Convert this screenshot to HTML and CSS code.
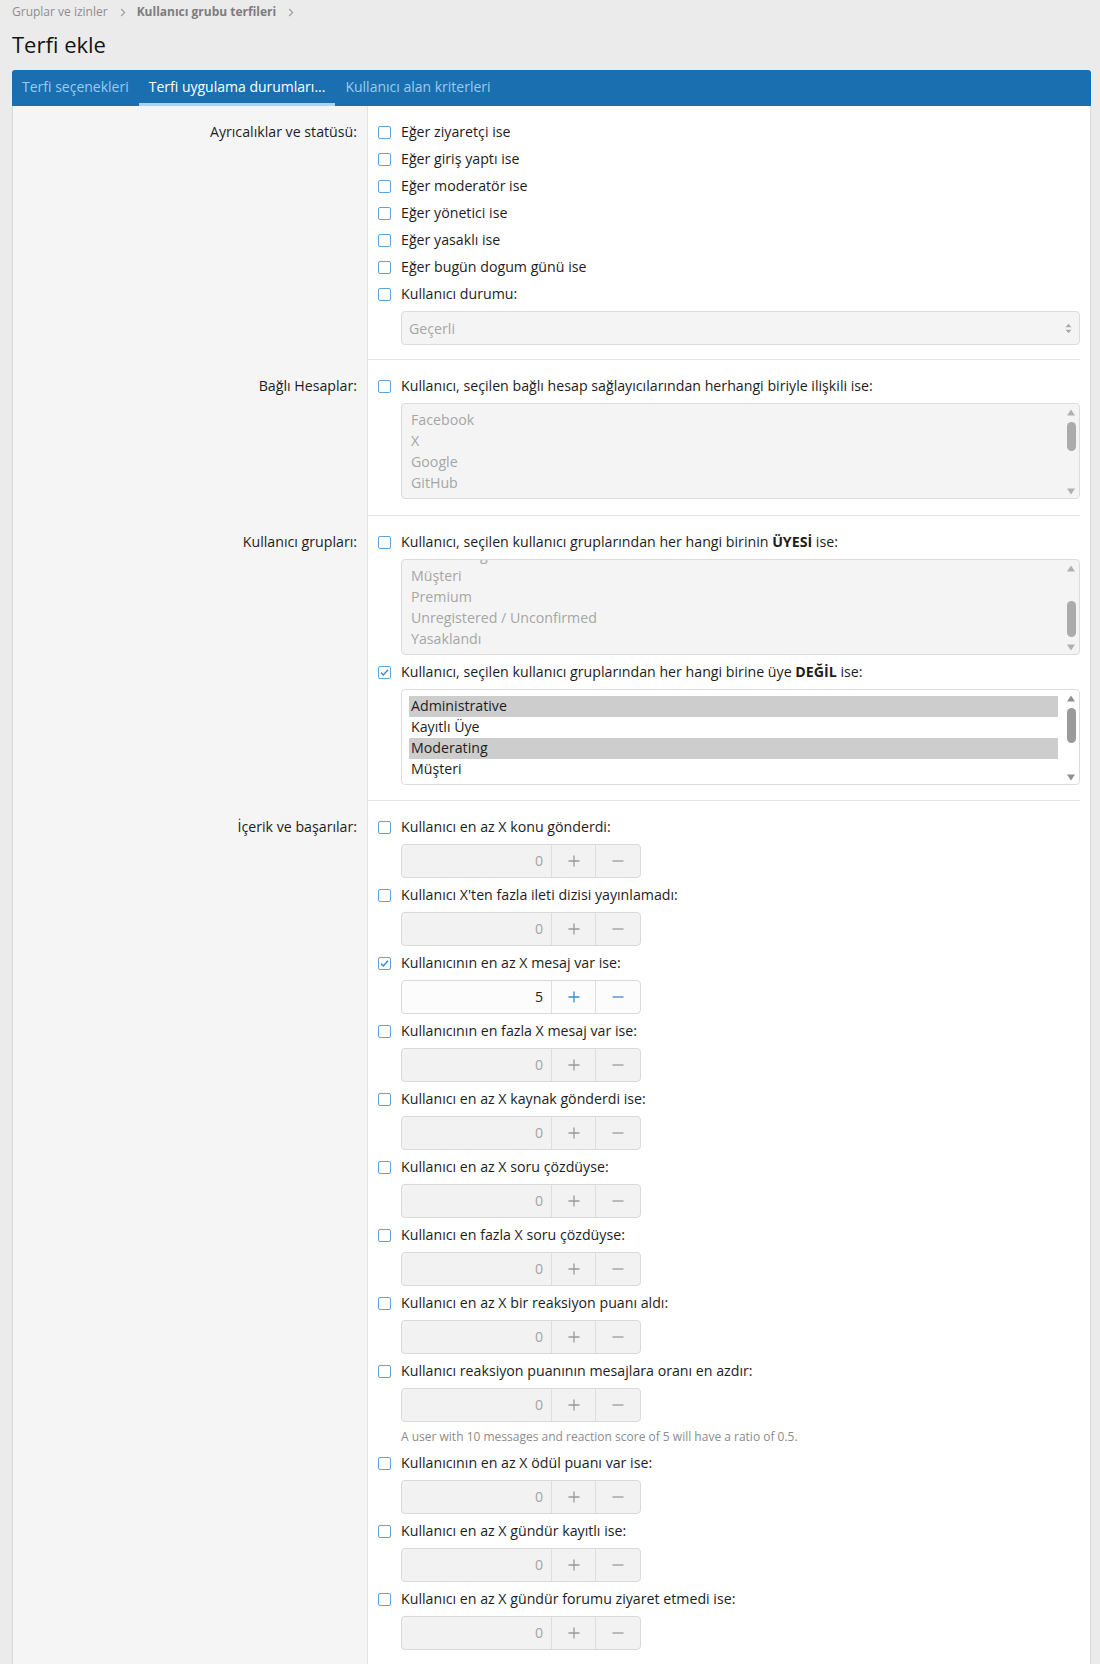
FILE: index.html
```html
<!DOCTYPE html>
<html lang="tr">
<head>
<meta charset="utf-8">
<title>Terfi ekle</title>
<link rel="stylesheet" href="styles.css">
</head>
<body>
<div class="page">
  <nav class="crumbs">
    <span class="crumb">Gruplar ve izinler</span>
    <span class="chev"><svg width="6" height="9" viewBox="0 0 6 9"><path d="M1.2 1 L4.6 4.5 L1.2 8" fill="none" stroke="#a0a0a0" stroke-width="1.2"/></svg></span>
    <span class="crumb crumb-b">Kullanıcı grubu terfileri</span>
    <span class="chev"><svg width="6" height="9" viewBox="0 0 6 9"><path d="M1.2 1 L4.6 4.5 L1.2 8" fill="none" stroke="#a0a0a0" stroke-width="1.2"/></svg></span>
  </nav>
  <h1 class="title">Terfi ekle</h1>

  <div class="block">
    <div class="tabs">
      <span class="tab">Terfi seçenekleri</span>
      <span class="tab active">Terfi uygulama durumları...</span>
      <span class="tab">Kullanıcı alan kriterleri</span>
    </div>

    <div class="form">
      <!-- Row 1 -->
      <div class="row row-1">
        <div class="dt">Ayrıcalıklar ve statüsü:</div>
        <div class="dd"><div class="dd-in">
          <ul class="choices">
            <li class="choice"><label class="cb-line"><span class="cb"></span><span>Eğer ziyaretçi ise</span></label></li>
            <li class="choice"><label class="cb-line"><span class="cb"></span><span>Eğer giriş yaptı ise</span></label></li>
            <li class="choice"><label class="cb-line"><span class="cb"></span><span>Eğer moderatör ise</span></label></li>
            <li class="choice"><label class="cb-line"><span class="cb"></span><span>Eğer yönetici ise</span></label></li>
            <li class="choice"><label class="cb-line"><span class="cb"></span><span>Eğer yasaklı ise</span></label></li>
            <li class="choice"><label class="cb-line"><span class="cb"></span><span>Eğer bugün dogum günü ise</span></label></li>
            <li class="choice dep-choice"><label class="cb-line"><span class="cb"></span><span>Kullanıcı durumu:</span></label>
              <div class="dep">
                <div class="select">
                  <span class="select-val">Geçerli</span>
                  <svg class="select-arrow" width="7" height="11" viewBox="0 0 7 11"><path d="M0.5 4.3 L3.5 0.8 L6.5 4.3 Z M0.5 6.7 L3.5 10.2 L6.5 6.7 Z" fill="#ababab"/></svg>
                </div>
              </div>
            </li>
          </ul>
        </div></div>
      </div>

      <!-- Row 2 -->
      <div class="row row-2">
        <div class="dt">Bağlı Hesaplar:</div>
        <div class="dd"><div class="dd-in">
          <ul class="choices">
            <li class="choice dep-choice"><label class="cb-line"><span class="cb"></span><span>Kullanıcı, seçilen bağlı hesap sağlayıcılarından herhangi biriyle ilişkili ise:</span></label>
              <div class="dep">
                <div class="lb lb-disabled">
                  <div class="lb-list">
                    <ul class="lb-items">
                      <li class="lb-item">Facebook</li>
                      <li class="lb-item">X</li>
                      <li class="lb-item">Google</li>
                      <li class="lb-item">GitHub</li>
                      <li class="lb-item">Linkedin</li>
                    </ul>
                  </div>
                  <div class="lb-sb">
                    <svg class="sb-arrow" width="8" height="7" viewBox="0 0 8 7"><path d="M0 6.5 L4 0.5 L8 6.5 Z" fill="#b0b0b0"/></svg>
                    <div class="sb-track"><div class="sb-thumb" style="margin-top:6px;height:29px"></div></div>
                    <svg class="sb-arrow" width="8" height="7" viewBox="0 0 8 7"><path d="M0 0.5 L4 6.5 L8 0.5 Z" fill="#b0b0b0"/></svg>
                  </div>
                </div>
              </div>
            </li>
          </ul>
        </div></div>
      </div>

      <!-- Row 3 -->
      <div class="row row-3">
        <div class="dt">Kullanıcı grupları:</div>
        <div class="dd"><div class="dd-in">
          <ul class="choices">
            <li class="choice dep-choice"><label class="cb-line"><span class="cb"></span><span>Kullanıcı, seçilen kullanıcı gruplarından her hangi birinin <b>ÜYESİ</b> ise:</span></label>
              <div class="dep">
                <div class="lb lb-disabled">
                  <div class="lb-list">
                    <ul class="lb-items" style="margin-top:-21px">
                      <li class="lb-item">Moderating</li>
                      <li class="lb-item">Müşteri</li>
                      <li class="lb-item">Premium</li>
                      <li class="lb-item">Unregistered / Unconfirmed</li>
                      <li class="lb-item">Yasaklandı</li>
                    </ul>
                  </div>
                  <div class="lb-sb">
                    <svg class="sb-arrow" width="8" height="7" viewBox="0 0 8 7"><path d="M0 6.5 L4 0.5 L8 6.5 Z" fill="#b0b0b0"/></svg>
                    <div class="sb-track"><div class="sb-thumb" style="margin-top:29px;height:36px"></div></div>
                    <svg class="sb-arrow" width="8" height="7" viewBox="0 0 8 7"><path d="M0 0.5 L4 6.5 L8 0.5 Z" fill="#b0b0b0"/></svg>
                  </div>
                </div>
              </div>
            </li>
            <li class="choice dep-choice"><label class="cb-line"><span class="cb cb-on"><svg width="11" height="11" viewBox="0 0 11 11"><path d="M2 5.6 L4.4 8 L9 2.8" fill="none" stroke="#3b8dd5" stroke-width="1.5"/></svg></span><span>Kullanıcı, seçilen kullanıcı gruplarından her hangi birine üye <b>DEĞİL</b> ise:</span></label>
              <div class="dep">
                <div class="lb">
                  <div class="lb-list">
                    <ul class="lb-items">
                      <li class="lb-item sel">Administrative</li>
                      <li class="lb-item">Kayıtlı Üye</li>
                      <li class="lb-item sel">Moderating</li>
                      <li class="lb-item">Müşteri</li>
                      <li class="lb-item">Premium</li>
                    </ul>
                  </div>
                  <div class="lb-sb">
                    <svg class="sb-arrow" width="8" height="7" viewBox="0 0 8 7"><path d="M0 6.5 L4 0.5 L8 6.5 Z" fill="#8f8f8f"/></svg>
                    <div class="sb-track"><div class="sb-thumb thumb-dark" style="margin-top:6px;height:35px"></div></div>
                    <svg class="sb-arrow" width="8" height="7" viewBox="0 0 8 7"><path d="M0 0.5 L4 6.5 L8 0.5 Z" fill="#8f8f8f"/></svg>
                  </div>
                </div>
              </div>
            </li>
          </ul>
        </div></div>
      </div>

      <!-- Row 4 -->
      <div class="row row-last">
        <div class="dt">İçerik ve başarılar:</div>
        <div class="dd"><div class="dd-in">
          <ul class="choices">
            <li class="choice dep-choice"><label class="cb-line"><span class="cb"></span><span>Kullanıcı en az X konu gönderdi:</span></label>
              <div class="dep"><div class="num"><span class="num-val">0</span><span class="num-btn"><svg width="12" height="12" viewBox="0 0 12 12"><path d="M6 0.5 V11.5 M0.5 6 H11.5" stroke="#9a9a9a" stroke-width="1.3"/></svg></span><span class="num-btn"><svg width="12" height="12" viewBox="0 0 12 12"><path d="M0.5 6 H11.5" stroke="#9a9a9a" stroke-width="1.3"/></svg></span></div></div>
            </li>
            <li class="choice dep-choice"><label class="cb-line"><span class="cb"></span><span>Kullanıcı X'ten fazla ileti dizisi yayınlamadı:</span></label>
              <div class="dep"><div class="num"><span class="num-val">0</span><span class="num-btn"><svg width="12" height="12" viewBox="0 0 12 12"><path d="M6 0.5 V11.5 M0.5 6 H11.5" stroke="#9a9a9a" stroke-width="1.3"/></svg></span><span class="num-btn"><svg width="12" height="12" viewBox="0 0 12 12"><path d="M0.5 6 H11.5" stroke="#9a9a9a" stroke-width="1.3"/></svg></span></div></div>
            </li>
            <li class="choice dep-choice"><label class="cb-line"><span class="cb cb-on"><svg width="11" height="11" viewBox="0 0 11 11"><path d="M2 5.6 L4.4 8 L9 2.8" fill="none" stroke="#3b8dd5" stroke-width="1.5"/></svg></span><span>Kullanıcının en az X mesaj var ise:</span></label>
              <div class="dep"><div class="num num-on"><span class="num-val">5</span><span class="num-btn"><svg width="12" height="12" viewBox="0 0 12 12"><path d="M6 0.5 V11.5 M0.5 6 H11.5" stroke="#3a8ad2" stroke-width="1.3"/></svg></span><span class="num-btn"><svg width="12" height="12" viewBox="0 0 12 12"><path d="M0.5 6 H11.5" stroke="#3a8ad2" stroke-width="1.3"/></svg></span></div></div>
            </li>
            <li class="choice dep-choice"><label class="cb-line"><span class="cb"></span><span>Kullanıcının en fazla X mesaj var ise:</span></label>
              <div class="dep"><div class="num"><span class="num-val">0</span><span class="num-btn"><svg width="12" height="12" viewBox="0 0 12 12"><path d="M6 0.5 V11.5 M0.5 6 H11.5" stroke="#9a9a9a" stroke-width="1.3"/></svg></span><span class="num-btn"><svg width="12" height="12" viewBox="0 0 12 12"><path d="M0.5 6 H11.5" stroke="#9a9a9a" stroke-width="1.3"/></svg></span></div></div>
            </li>
            <li class="choice dep-choice"><label class="cb-line"><span class="cb"></span><span>Kullanıcı en az X kaynak gönderdi ise:</span></label>
              <div class="dep"><div class="num"><span class="num-val">0</span><span class="num-btn"><svg width="12" height="12" viewBox="0 0 12 12"><path d="M6 0.5 V11.5 M0.5 6 H11.5" stroke="#9a9a9a" stroke-width="1.3"/></svg></span><span class="num-btn"><svg width="12" height="12" viewBox="0 0 12 12"><path d="M0.5 6 H11.5" stroke="#9a9a9a" stroke-width="1.3"/></svg></span></div></div>
            </li>
            <li class="choice dep-choice"><label class="cb-line"><span class="cb"></span><span>Kullanıcı en az X soru çözdüyse:</span></label>
              <div class="dep"><div class="num"><span class="num-val">0</span><span class="num-btn"><svg width="12" height="12" viewBox="0 0 12 12"><path d="M6 0.5 V11.5 M0.5 6 H11.5" stroke="#9a9a9a" stroke-width="1.3"/></svg></span><span class="num-btn"><svg width="12" height="12" viewBox="0 0 12 12"><path d="M0.5 6 H11.5" stroke="#9a9a9a" stroke-width="1.3"/></svg></span></div></div>
            </li>
            <li class="choice dep-choice"><label class="cb-line"><span class="cb"></span><span>Kullanıcı en fazla X soru çözdüyse:</span></label>
              <div class="dep"><div class="num"><span class="num-val">0</span><span class="num-btn"><svg width="12" height="12" viewBox="0 0 12 12"><path d="M6 0.5 V11.5 M0.5 6 H11.5" stroke="#9a9a9a" stroke-width="1.3"/></svg></span><span class="num-btn"><svg width="12" height="12" viewBox="0 0 12 12"><path d="M0.5 6 H11.5" stroke="#9a9a9a" stroke-width="1.3"/></svg></span></div></div>
            </li>
            <li class="choice dep-choice"><label class="cb-line"><span class="cb"></span><span>Kullanıcı en az X bir reaksiyon puanı aldı:</span></label>
              <div class="dep"><div class="num"><span class="num-val">0</span><span class="num-btn"><svg width="12" height="12" viewBox="0 0 12 12"><path d="M6 0.5 V11.5 M0.5 6 H11.5" stroke="#9a9a9a" stroke-width="1.3"/></svg></span><span class="num-btn"><svg width="12" height="12" viewBox="0 0 12 12"><path d="M0.5 6 H11.5" stroke="#9a9a9a" stroke-width="1.3"/></svg></span></div></div>
            </li>
            <li class="choice dep-choice"><label class="cb-line"><span class="cb"></span><span>Kullanıcı reaksiyon puanının mesajlara oranı en azdır:</span></label>
              <div class="dep"><div class="num"><span class="num-val">0</span><span class="num-btn"><svg width="12" height="12" viewBox="0 0 12 12"><path d="M6 0.5 V11.5 M0.5 6 H11.5" stroke="#9a9a9a" stroke-width="1.3"/></svg></span><span class="num-btn"><svg width="12" height="12" viewBox="0 0 12 12"><path d="M0.5 6 H11.5" stroke="#9a9a9a" stroke-width="1.3"/></svg></span></div>
                <div class="hint">A user with 10 messages and reaction score of 5 will have a ratio of 0.5.</div>
              </div>
            </li>
            <li class="choice dep-choice"><label class="cb-line"><span class="cb"></span><span>Kullanıcının en az X ödül puanı var ise:</span></label>
              <div class="dep"><div class="num"><span class="num-val">0</span><span class="num-btn"><svg width="12" height="12" viewBox="0 0 12 12"><path d="M6 0.5 V11.5 M0.5 6 H11.5" stroke="#9a9a9a" stroke-width="1.3"/></svg></span><span class="num-btn"><svg width="12" height="12" viewBox="0 0 12 12"><path d="M0.5 6 H11.5" stroke="#9a9a9a" stroke-width="1.3"/></svg></span></div></div>
            </li>
            <li class="choice dep-choice"><label class="cb-line"><span class="cb"></span><span>Kullanıcı en az X gündür kayıtlı ise:</span></label>
              <div class="dep"><div class="num"><span class="num-val">0</span><span class="num-btn"><svg width="12" height="12" viewBox="0 0 12 12"><path d="M6 0.5 V11.5 M0.5 6 H11.5" stroke="#9a9a9a" stroke-width="1.3"/></svg></span><span class="num-btn"><svg width="12" height="12" viewBox="0 0 12 12"><path d="M0.5 6 H11.5" stroke="#9a9a9a" stroke-width="1.3"/></svg></span></div></div>
            </li>
            <li class="choice dep-choice"><label class="cb-line"><span class="cb"></span><span>Kullanıcı en az X gündür forumu ziyaret etmedi ise:</span></label>
              <div class="dep"><div class="num"><span class="num-val">0</span><span class="num-btn"><svg width="12" height="12" viewBox="0 0 12 12"><path d="M6 0.5 V11.5 M0.5 6 H11.5" stroke="#9a9a9a" stroke-width="1.3"/></svg></span><span class="num-btn"><svg width="12" height="12" viewBox="0 0 12 12"><path d="M0.5 6 H11.5" stroke="#9a9a9a" stroke-width="1.3"/></svg></span></div></div>
            </li>
          </ul>
        </div></div>
      </div>
    </div>
  </div>
</div>
</body>
</html>
```

FILE: styles.css
```css
* { box-sizing: border-box; }

html, body {
  margin: 0;
  background: #ebebeb;
}

body {
  font-family: "Open Sans", "Noto Sans", sans-serif;
  color: #1d1d1d;
  font-size: 14.2px;
}

.page {
  padding: 0 9px 0 12px;
}

/* breadcrumbs */
.crumbs {
  display: flex;
  align-items: center;
  height: 21px;
  padding-top: 3px;
  font-size: 12px;
  line-height: 18px;
  color: #8d8d8d;
}
.crumb-b {
  font-weight: 700;
  color: #7d7d7d;
}
.chev {
  display: inline-flex;
  margin: 0 11px 0 12px;
}

.title {
  margin: 8.5px 0 0;
  font-size: 22px;
  line-height: 28px;
  font-weight: 400;
  color: #141414;
}

/* block */
.block {
  margin-top: 12.5px;
}

.tabs {
  display: flex;
  height: 36px;
  background: #1a6fb1;
  border-radius: 3px 3px 0 0;
}
.tab {
  padding: 0 10px;
  line-height: 33px;
  border-bottom: 3px solid transparent;
  font-size: 14px;
  color: #9ccaf0;
  white-space: nowrap;
}
.tab.active {
  color: #ffffff;
  border-bottom-color: #a9d2f3;
}

.form {
  background: #ffffff;
  border: 1px solid #d9d9d9;
  border-top: 0;
}

.row {
  display: grid;
  grid-template-columns: 355px 1fr;
}

.dt {
  background: #f5f5f5;
  border-right: 1px solid #e3e3e3;
  padding: 15px 10px 0 0;
  text-align: right;
  font-size: 14.2px;
  line-height: 22px;
  color: #1d1d1d;
}

.dd {
  padding-right: 10px;
}
.dd-in {
  padding: 15px 0 15px 10px;
  border-bottom: 1px solid #e3e3e3;
}
.row-1 .dd-in { padding-bottom: 14px; }
.row-2 .dd-in { padding-bottom: 16px; }
.row-last .dd-in {
  border-bottom: 0;
  padding-bottom: 14px;
}

/* choices */
.choices {
  list-style: none;
  margin: 0;
  padding: 0;
}
.choice { margin-bottom: 5px; }
.choice.dep-choice { margin-bottom: 6px; }
.choice:last-child { margin-bottom: 0; }

.cb-line {
  display: flex;
  align-items: center;
  font-size: 14.2px;
  line-height: 22px;
  white-space: nowrap;
}
.cb-line b { font-weight: 700; }

.cb {
  flex: none;
  width: 13px;
  height: 13px;
  margin-right: 10px;
  border: 1px solid #5fa2dc;
  border-radius: 2px;
  background: #ffffff;
  display: flex;
  align-items: center;
  justify-content: center;
}

.dep {
  padding: 6px 0 0 23px;
}

/* select */
.select {
  display: flex;
  align-items: center;
  justify-content: space-between;
  height: 34px;
  padding: 0 7px 0 7px;
  border: 1px solid #dcdcdc;
  border-radius: 4px;
  background: #f4f4f4;
  color: #a6a6a6;
  font-size: 14.2px;
}

/* listbox */
.lb {
  display: flex;
  height: 96px;
  border: 1px solid #dcdcdc;
  border-radius: 4px;
  background: #ffffff;
  overflow: hidden;
}
.lb-disabled {
  background: #f4f4f4;
}
.lb-list {
  flex: 1;
  overflow: hidden;
  padding: 5.5px 4px 0 7px;
}
.lb-items {
  list-style: none;
  margin: 0;
  padding: 0;
}
.lb-item {
  height: 21px;
  line-height: 19px;
  padding-left: 2px;
  padding-bottom: 2px;
  font-size: 14.2px;
  color: #1d1d1d;
  white-space: nowrap;
}
.lb-disabled .lb-item { color: #a6a6a6; }
.lb-item.sel { background: #cdcdcd; }

.lb-sb {
  flex: none;
  width: 17px;
  display: flex;
  flex-direction: column;
  align-items: center;
  padding: 5px 0 3px 1px;
}
.sb-arrow { flex: none; display: block; }
.sb-track {
  flex: 1;
  display: flex;
  flex-direction: column;
  align-items: center;
}
.sb-thumb {
  width: 9px;
  border-radius: 4.5px;
  background: #ababab;
}
.sb-thumb.thumb-dark { background: #9a9a9a; }

/* number box */
.num {
  display: flex;
  width: 240px;
  height: 34px;
  border: 1px solid #d9d9d9;
  border-radius: 4px;
  background: #f2f2f2;
}
.num-val {
  width: 149px;
  padding-right: 8px;
  text-align: right;
  line-height: 32px;
  font-size: 14.2px;
  color: #a3a3a3;
}
.num-btn {
  width: 44px;
  border-left: 1px solid #dedede;
  display: flex;
  align-items: center;
  justify-content: center;
}
.num-btn:last-child { width: 45px; }
.num-on {
  background: #fcfcfc;
}
.num-on .num-val { color: #1d1d1d; }

.hint {
  margin-top: 6px;
  font-size: 12px;
  line-height: 18px;
  color: #8c8c8c;
  white-space: nowrap;
}
```
